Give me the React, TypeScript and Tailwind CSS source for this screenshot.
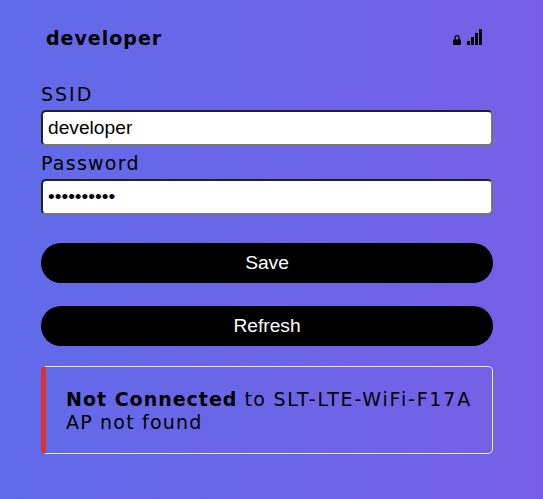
export default function App() {
  return (
    <main className="h-[499px] bg-linear-to-r from-[#606be9] to-[#765fe6] pl-[41px] pr-[50px] pt-[23px] font-['Verdana','DejaVu_Sans',sans-serif] text-[19px] leading-[23px] text-black tracking-[1px]">
      <header className="flex h-[30px] items-center justify-between pl-[5px] pr-[11px]">
        <h1 className="font-bold">developer</h1>
        <div className="flex items-end gap-[6px] pb-[2px]">
          <svg width="8" height="10" viewBox="0 0 8 10"><path d="M2 5V2.7a2 2 0 0 1 4 0V5" fill="none" stroke="black" strokeWidth="1.3"/><rect y="4.5" width="8" height="5.5" rx="1"/></svg>
          <svg width="15" height="16" viewBox="0 0 15 16"><path d="M0 12h3v4H0zM4 8h3v8H4zM8 4h3v12H8zM12 0h3v16h-3z"/></svg>
        </div>
      </header>
      <form className="mt-[30px] flex flex-col" onSubmit={(e) => e.preventDefault()}>
        <label htmlFor="ssid" className="tracking-[2px]">SSID</label>
        <input id="ssid" defaultValue="developer" className="mt-[4px] h-[36px] rounded-[5px] border-2 border-[#767676] border-t-[#222] border-l-[#222] bg-white px-[5px] font-['Liberation_Sans',sans-serif] text-[19.2px] tracking-normal" />
        <label htmlFor="password" className="mt-[6px] tracking-[1.25px]">Password</label>
        <input id="password" type="password" defaultValue="aaaaaaaaaa" className="mt-[4px] h-[36px] rounded-[5px] border-2 border-[#767676] border-t-[#222] border-l-[#222] bg-white px-[5px] font-['Liberation_Sans',sans-serif] text-[19.2px] tracking-normal" />
        <button className="mt-[28px] h-[40px] rounded-full bg-black pb-[2px] font-['Liberation_Sans',sans-serif] text-[19.2px] tracking-normal text-white">Save</button>
        <button className="mt-[23px] h-[40px] rounded-full bg-black pb-[2px] font-['Liberation_Sans',sans-serif] text-[19.2px] tracking-normal text-white">Refresh</button>
      </form>
      <section className="mt-[20px] h-[88px] whitespace-nowrap rounded-[5px] border border-l-[5px] border-[#eee] border-l-[#d9332e] pt-[21px] pl-[20px]">
        <b>Not Connected</b> <span className="tracking-[1.3px]">to </span><span className="tracking-[1.8px]">SLT-LTE-WiFi-F17A</span><br /><span className="tracking-[1.2px]">AP not found</span>
      </section>
    </main>
  );
}
